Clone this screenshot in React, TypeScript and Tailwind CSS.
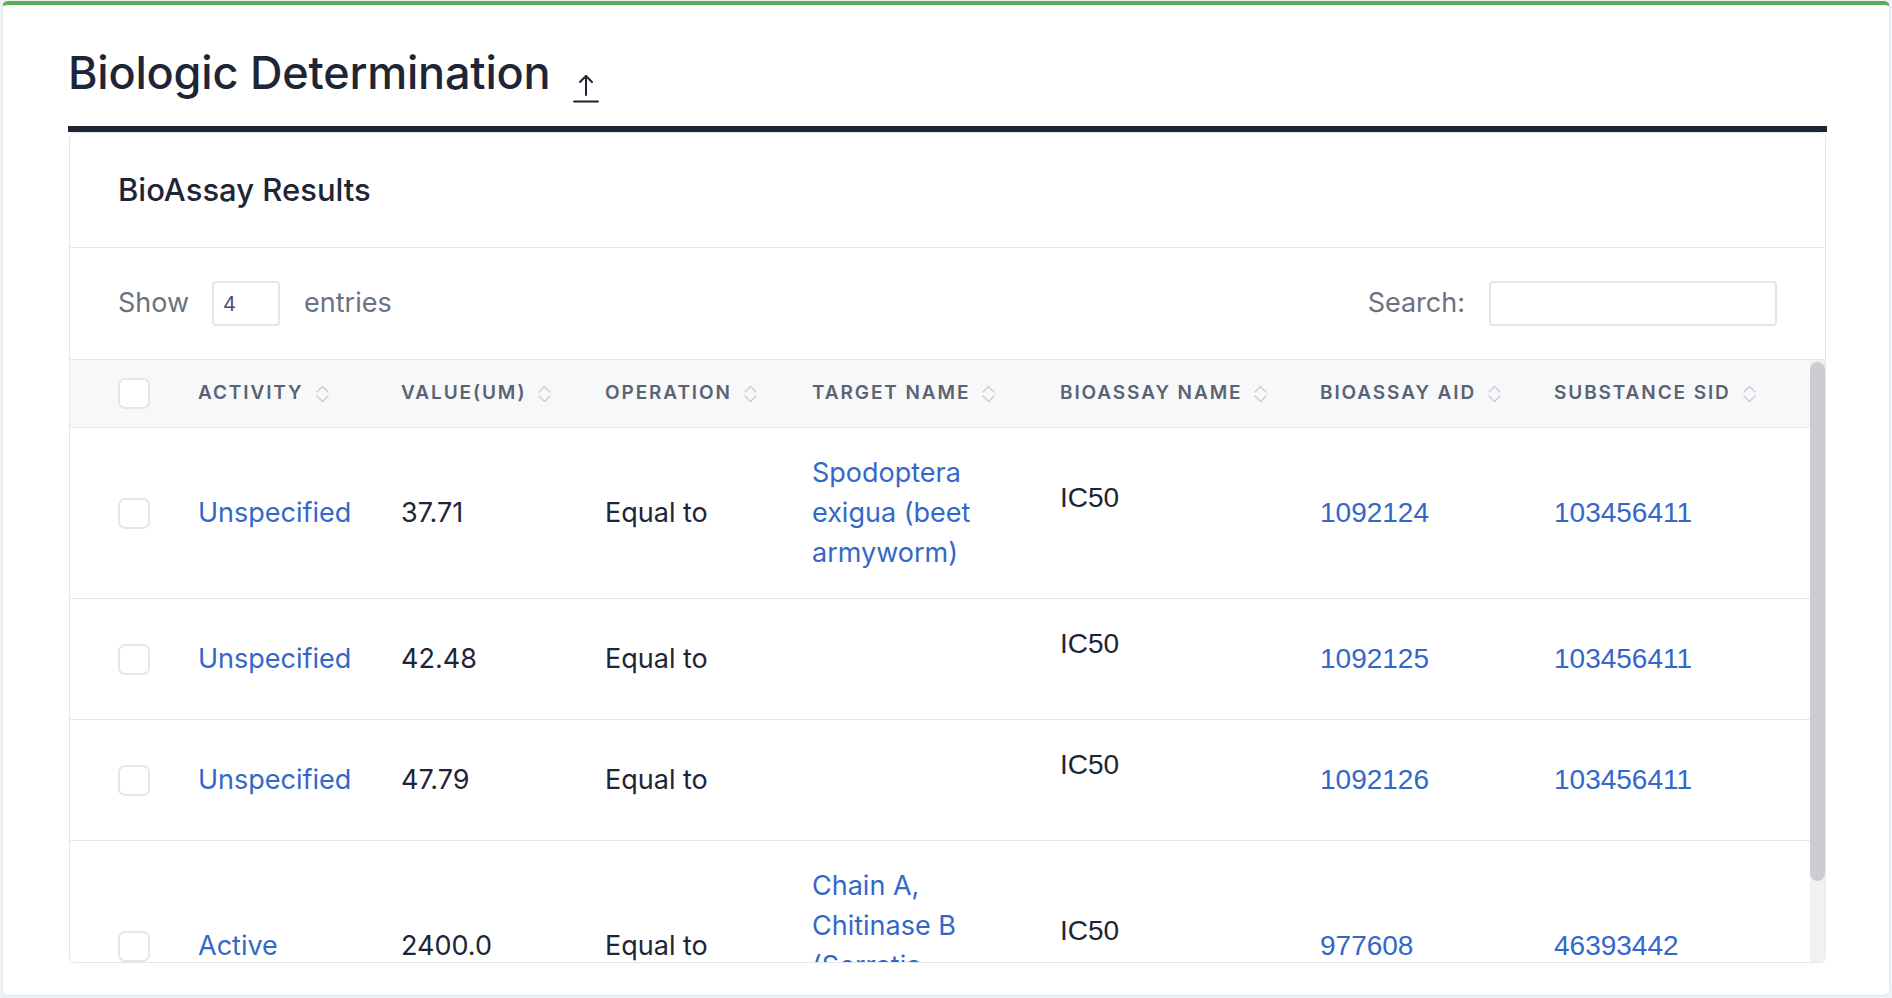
import React from 'react';

interface Row {
  id: number;
  activity: string;
  value: string;
  operation: string;
  target: string;
  bioassay: string;
  aid: string;
  sid: string;
}

const rows: Row[] = [
  { id: 1, activity: 'Unspecified', value: '37.71', operation: 'Equal to', target: 'Spodoptera exigua (beet armyworm)', bioassay: 'IC50', aid: '1092124', sid: '103456411' },
  { id: 2, activity: 'Unspecified', value: '42.48', operation: 'Equal to', target: '', bioassay: 'IC50', aid: '1092125', sid: '103456411' },
  { id: 3, activity: 'Unspecified', value: '47.79', operation: 'Equal to', target: '', bioassay: 'IC50', aid: '1092126', sid: '103456411' },
  { id: 4, activity: 'Active', value: '2400.0', operation: 'Equal to', target: 'Chain A, Chitinase B (Serratia marcescens)', bioassay: 'IC50', aid: '977608', sid: '46393442' },
];

const columns = ['Activity', 'Value(uM)', 'Operation', 'Target Name', 'BioAssay Name', 'BioAssay AID', 'Substance SID'];

// checkbox + 7 data columns
const gridCols = 'grid grid-cols-[80px_203px_204px_207px_248px_260px_234px_1fr] pl-[48px]';

function SortIcon() {
  return (
    <svg width="17" height="22" viewBox="0 0 17 22" fill="none" stroke="#c9cdd3" strokeWidth="1.3" strokeLinecap="round" strokeLinejoin="round" className="ml-[10px] shrink-0">
      <path d="M3 9 L8.5 3.5 L14 9" />
      <path d="M3 13 L8.5 18.5 L14 13" />
    </svg>
  );
}

function Checkbox() {
  return <div className="w-[32px] h-[31px] rounded-[7px] border-2 border-[#e4e6ea] bg-white" />;
}

export default function App() {
  return (
    <div className="w-[1892px] h-[998px] bg-[#eef1f5] pt-[1px] pl-[2px] font-['Inter',sans-serif]">
      <div className="w-[1888px] h-[995px] bg-white border border-[#e4e7eb] border-t-[4px] border-t-[#5aad58] rounded-[6px] pl-[65px] pr-[62px] pt-[42px]">
        {/* Title */}
        <div className="flex items-start">
          <h1 className="text-[45px] leading-[52px] font-medium text-[#1e2536] tracking-[-0.2px]">Biologic Determination</h1>
          <svg width="28" height="32" viewBox="0 0 28 32" fill="none" stroke="#1e2536" strokeWidth="2" strokeLinecap="round" strokeLinejoin="round" className="ml-[22px] mt-[24px]">
            <path d="M14 24 V5" />
            <path d="M8 11 L14 5 L20 11" />
            <path d="M2 30.5 H26" />
          </svg>
        </div>
        <div className="mt-[23px] h-[6px] bg-[#1d2435]" />

        {/* BioAssay card */}
        <div className="mx-[1px] border border-[#e4e6ea] rounded-[6px] overflow-hidden">
          <div className="h-[115px] flex items-center pl-[48px] border-b border-[#e4e6ea]">
            <h2 className="text-[31px] font-medium text-[#1e2536]">BioAssay Results</h2>
          </div>

          <div className="h-[111px] flex items-center justify-between pl-[48px] pr-[48px] text-[27px] text-[#6b7180]">
            <div className="flex items-center">
              <span>Show</span>
              <div className="ml-[23px] mr-[24px] w-[68px] h-[45px] border-2 border-[#e4e6ea] rounded-[4px] flex items-center pl-[9px] text-[20px] text-[#4b5261]">4</div>
              <span>entries</span>
            </div>
            <div className="flex items-center">
              <span>Search:</span>
              <div className="ml-[24px] w-[288px] h-[45px] border-2 border-[#e4e6ea] rounded-[4px]" />
            </div>
          </div>

          {/* Table viewport with its scrollbar */}
          <div className="h-[603px] border-t border-[#e4e6ea] flex">
            <div className="flex-1 overflow-hidden">
              <div className={`${gridCols} h-[68px] items-center bg-[#f7f8fa] border-b border-[#e4e6ea]`}>
                <Checkbox />
                {columns.map((c) => (
                  <div key={c} className="flex items-center text-[19px] font-semibold uppercase tracking-[0.1em] text-[#5b6272]">
                    <span>{c}</span>
                    <SortIcon />
                  </div>
                ))}
              </div>

              {rows.map((r) => (
                <div key={r.id} className={`${gridCols} items-center py-[25px] border-b border-[#e4e6ea] text-[27px] leading-[40px]`}>
                  <Checkbox />
                  <a className="text-[#3468c8]">{r.activity}</a>
                  <div className="text-[#1e2536]">{r.value}</div>
                  <div className="text-[#1e2536]">{r.operation}</div>
                  <div className="pr-[44px] text-[#3468c8]">{r.target}</div>
                  <div className="font-['Liberation_Sans',sans-serif] text-[28px] text-[#1e2536]">
                    <div>{r.bioassay}</div>
                    <div className="h-[30px]" />
                  </div>
                  <a className="font-['Liberation_Sans',sans-serif] text-[28px] text-[#3468c8]">{r.aid}</a>
                  <a className="font-['Liberation_Sans',sans-serif] text-[28px] text-[#3468c8]">{r.sid}</a>
                </div>
              ))}
            </div>
            <div className="w-[15px] bg-[#f1f1f2] pt-[2px]">
              <div className="h-[519px] rounded-full bg-[#cdcdd1]" />
            </div>
          </div>
        </div>
      </div>
    </div>
  );
}
